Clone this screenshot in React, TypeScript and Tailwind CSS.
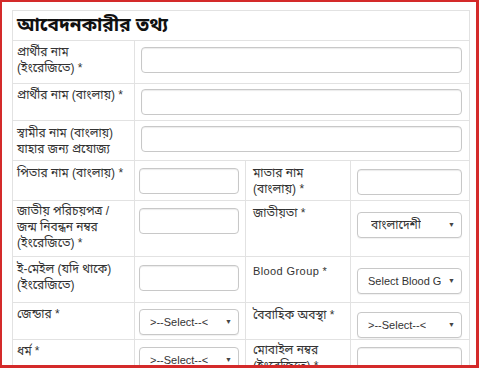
import React from "react";

const bn = { fontFamily: '"Liberation Sans", "Noto Sans Bengali", "Noto Serif Bengali", "Lohit Bengali", sans-serif' };

function Input({ className = "" }: { className?: string }) {
  return (
    <div
      className={`h-[26px] rounded-[4px] border border-[#c8c8c8] bg-white shadow-[inset_0_1px_1px_rgba(0,0,0,0.08)] ${className}`}
    />
  );
}

function Select({ text, className = "" }: { text: string; className?: string }) {
  return (
    <div
      className={`flex h-[26px] items-center justify-between rounded-[4px] border border-[#c8c8c8] bg-white pl-[10px] pr-[6px] text-[11px] text-[#333] shadow-[0_1px_1px_rgba(0,0,0,0.06)] ${className}`}
      style={bn}
    >
      <span className="whitespace-nowrap overflow-hidden">{text}</span>
      <span className="text-[7px] text-[#444]">▼</span>
    </div>
  );
}

function Label({ children }: { children: React.ReactNode }) {
  return (
    <div className="text-[12px] leading-[16px] text-[#333]" style={bn}>
      {children}
    </div>
  );
}

export default function App() {
  const cell = "border-[#e2e2e2]";
  return (
    <div className="h-[368px] w-[479px] overflow-hidden border-b-[3px] border-l-2 border-r-[3px] border-t-2 border-[#d42a2a] bg-white">
      <div className="ml-[10px] mt-[8px] w-[458px] border border-[#e2e2e2]" style={{ fontFamily: '"Liberation Sans", Arial, sans-serif' }}>
        <div className="h-[30px] border-b border-[#e2e2e2] pl-[4px] pt-[2px] text-[19px] font-bold leading-[24px] text-[#111]" style={bn}>
          আবেদনকারীর তথ্য
        </div>
        <div className="grid grid-cols-[122px_111px_105px_1fr]">
          {/* Row 1 */}
          <div className={`h-[43px] border-b border-r ${cell} pl-[4px] pt-[3px]`}>
            <Label>প্রার্থীর নাম<br />(ইংরেজিতে) *</Label>
          </div>
          <div className={`col-span-3 border-b ${cell} pl-[6px] pr-[7px] pt-[6px]`}>
            <Input />
          </div>
          {/* Row 2 */}
          <div className={`h-[37px] border-b border-r ${cell} pl-[4px] pt-[3px]`}>
            <Label>প্রার্থীর নাম (বাংলায়) *</Label>
          </div>
          <div className={`col-span-3 border-b ${cell} pl-[6px] pr-[7px] pt-[5px]`}>
            <Input />
          </div>
          {/* Row 3 */}
          <div className={`h-[40px] border-b border-r ${cell} pl-[4px] pt-[4px]`}>
            <Label>স্বামীর নাম (বাংলায়)<br />যাহার জন্য প্রযোজ্য</Label>
          </div>
          <div className={`col-span-3 border-b ${cell} pl-[6px] pr-[7px] pt-[5px]`}>
            <Input />
          </div>
          {/* Row 4 */}
          <div className={`h-[40px] border-b border-r ${cell} pl-[4px] pt-[4px]`}>
            <Label>পিতার নাম (বাংলায়) *</Label>
          </div>
          <div className={`border-b border-r ${cell} pl-[4px] pr-[6px] pt-[7px]`}>
            <Input />
          </div>
          <div className={`border-b border-r ${cell} pl-[7px] pt-[4px]`}>
            <Label>মাতার নাম<br />(বাংলায়) *</Label>
          </div>
          <div className={`border-b ${cell} pl-[6px] pr-[7px] pt-[8px]`}>
            <Input />
          </div>
          {/* Row 5 */}
          <div className={`h-[56px] border-b border-r ${cell} pl-[4px] pt-[2px]`}>
            <Label>জাতীয় পরিচয়পত্র /<br />জন্ম নিবন্ধন নম্বর<br />(ইংরেজিতে) *</Label>
          </div>
          <div className={`border-b border-r ${cell} pl-[4px] pr-[6px] pt-[7px]`}>
            <Input />
          </div>
          <div className={`border-b border-r ${cell} pl-[7px] pt-[4px]`}>
            <Label>জাতীয়তা *</Label>
          </div>
          <div className={`border-b ${cell} pl-[6px] pr-[7px] pt-[11px]`}>
            <Select text="বাংলাদেশী" className="!text-[12px] pl-[13px]" />
          </div>
          {/* Row 6 */}
          <div className={`h-[46px] border-b border-r ${cell} pl-[4px] pt-[4px]`}>
            <Label>ই-মেইল (যদি থাকে)<br />(ইংরেজিতে)</Label>
          </div>
          <div className={`border-b border-r ${cell} pl-[4px] pr-[6px] pt-[8px]`}>
            <Input />
          </div>
          <div className={`border-b border-r ${cell} pl-[7px] pt-[6px] text-[11px] tracking-[0.4px] text-[#333]`}>
            Blood Group *
          </div>
          <div className={`border-b ${cell} pl-[6px] pr-[7px] pt-[11px]`}>
            <Select text="Select Blood G" />
          </div>
          {/* Row 7 */}
          <div className={`h-[37px] border-b border-r ${cell} pl-[4px] pt-[3px]`}>
            <Label>জেন্ডার *</Label>
          </div>
          <div className={`border-b border-r ${cell} pl-[4px] pr-[6px] pt-[6px]`}>
            <Select text=">--Select--<" />
          </div>
          <div className={`border-b border-r ${cell} pl-[7px] pt-[4px]`}>
            <Label>বৈবাহিক অবস্থা *</Label>
          </div>
          <div className={`border-b ${cell} pl-[6px] pr-[7px] pt-[9px]`}>
            <Select text=">--Select--<" />
          </div>
          {/* Row 8 */}
          <div className={`h-[44px] border-r ${cell} pl-[4px] pt-[3px]`}>
            <Label>ধর্ম *</Label>
          </div>
          <div className={`border-r ${cell} pl-[4px] pr-[6px] pt-[7px]`}>
            <Select text=">--Select--<" />
          </div>
          <div className={`border-r ${cell} pl-[7px] pt-[2px]`}>
            <Label>মোবাইল নম্বর<br />(ইংরেজিতে) *</Label>
          </div>
          <div className={`${cell} pl-[6px] pr-[7px] pt-[7px]`}>
            <Input />
          </div>
        </div>
      </div>
    </div>
  );
}
